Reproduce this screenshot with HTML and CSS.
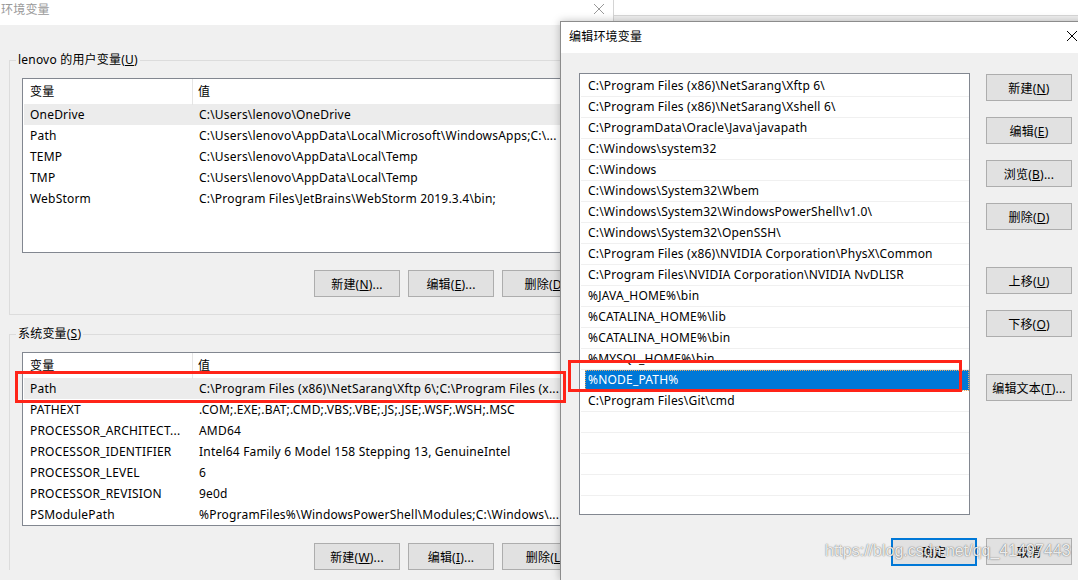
FILE: index.html
```html
<!DOCTYPE html>
<html lang="zh-CN">
<head>
    <meta charset="UTF-8">
    <title>环境变量</title>
    <link rel="stylesheet" href="styles.css">
</head>
<body>
    <div class="desk">
        <div class="env-win">
            <div class="env-title">
                <span>环境变量</span>
                <svg class="close-x" width="12" height="12" viewBox="0 0 12 12"><path d="M1 1L11 11M11 1L1 11" stroke="#999" stroke-width="1"/></svg>
            </div>
            <div class="env-body">
                <fieldset class="group">
                    <legend>lenovo 的用户变量(<u>U</u>)</legend>
                    <div class="var-list user-list">
                        <div class="var-head"><span>变量</span><span class="col-val">值</span></div>
                        <div class="var-row selected"><span>OneDrive</span><span class="val">C:\Users\lenovo\OneDrive</span></div>
                        <div class="var-row"><span>Path</span><span class="val">C:\Users\lenovo\AppData\Local\Microsoft\WindowsApps;C:\...</span></div>
                        <div class="var-row"><span>TEMP</span><span class="val">C:\Users\lenovo\AppData\Local\Temp</span></div>
                        <div class="var-row"><span>TMP</span><span class="val">C:\Users\lenovo\AppData\Local\Temp</span></div>
                        <div class="var-row"><span>WebStorm</span><span class="val">C:\Program Files\JetBrains\WebStorm 2019.3.4\bin;</span></div>
                    </div>
                    <div class="btn-row">
                        <button class="btn">新建(<u>N</u>)...</button>
                        <button class="btn">编辑(<u>E</u>)...</button>
                        <button class="btn">删除(<u>D</u>)</button>
                    </div>
                </fieldset>

                <fieldset class="group sys-group">
                    <legend>系统变量(<u>S</u>)</legend>
                    <div class="var-list sys-list">
                        <div class="var-head"><span>变量</span><span class="col-val">值</span></div>
                        <div class="var-row selected"><span>Path</span><span class="val">C:\Program Files (x86)\NetSarang\Xftp 6\;C:\Program Files (x...</span></div>
                        <div class="var-row"><span>PATHEXT</span><span class="val">.COM;.EXE;.BAT;.CMD;.VBS;.VBE;.JS;.JSE;.WSF;.WSH;.MSC</span></div>
                        <div class="var-row"><span>PROCESSOR_ARCHITECT...</span><span class="val">AMD64</span></div>
                        <div class="var-row"><span>PROCESSOR_IDENTIFIER</span><span class="val">Intel64 Family 6 Model 158 Stepping 13, GenuineIntel</span></div>
                        <div class="var-row"><span>PROCESSOR_LEVEL</span><span class="val">6</span></div>
                        <div class="var-row"><span>PROCESSOR_REVISION</span><span class="val">9e0d</span></div>
                        <div class="var-row"><span>PSModulePath</span><span class="val">%ProgramFiles%\WindowsPowerShell\Modules;C:\Windows\...</span></div>
                    </div>
                    <div class="btn-row">
                        <button class="btn">新建(<u>W</u>)...</button>
                        <button class="btn">编辑(<u>I</u>)...</button>
                        <button class="btn">删除(<u>L</u>)</button>
                    </div>
                </fieldset>
            </div>
        </div>
        <div class="behind">
            <div class="behind-bar"></div>
        </div>
    </div>

    <!-- 编辑环境变量 dialog, floating over the first window -->
    <div class="dialog">
        <div class="dlg-title">
            <span>编辑环境变量</span>
            <svg class="close-x" width="12" height="12" viewBox="0 0 12 12"><path d="M1 1L11 11M11 1L1 11" stroke="#000" stroke-width="1"/></svg>
        </div>
        <div class="dlg-body">
            <div class="path-list">
                <div class="path-row">C:\Program Files (x86)\NetSarang\Xftp 6\</div>
                <div class="path-row">C:\Program Files (x86)\NetSarang\Xshell 6\</div>
                <div class="path-row">C:\ProgramData\Oracle\Java\javapath</div>
                <div class="path-row">C:\Windows\system32</div>
                <div class="path-row">C:\Windows</div>
                <div class="path-row">C:\Windows\System32\Wbem</div>
                <div class="path-row">C:\Windows\System32\WindowsPowerShell\v1.0\</div>
                <div class="path-row">C:\Windows\System32\OpenSSH\</div>
                <div class="path-row">C:\Program Files (x86)\NVIDIA Corporation\PhysX\Common</div>
                <div class="path-row">C:\Program Files\NVIDIA Corporation\NVIDIA NvDLISR</div>
                <div class="path-row">%JAVA_HOME%\bin</div>
                <div class="path-row">%CATALINA_HOME%\lib</div>
                <div class="path-row">%CATALINA_HOME%\bin</div>
                <div class="path-row">%MYSQL_HOME%\bin</div>
                <div class="path-row active">%NODE_PATH%</div>
                <div class="path-row">C:\Program Files\Git\cmd</div>
                <div class="path-row"></div>
                <div class="path-row"></div>
                <div class="path-row"></div>
                <div class="path-row"></div>
                <div class="path-row"></div>
            </div>
            <div class="side-btns">
                <button class="btn">新建(<u>N</u>)</button>
                <button class="btn">编辑(<u>E</u>)</button>
                <button class="btn">浏览(<u>B</u>)...</button>
                <button class="btn">删除(<u>D</u>)</button>
                <button class="btn far">上移(<u>U</u>)</button>
                <button class="btn">下移(<u>O</u>)</button>
                <button class="btn far">编辑文本(<u>T</u>)...</button>
            </div>
            <div class="dlg-foot">
                <button class="btn default">确定</button>
                <button class="btn">取消</button>
            </div>
        </div>
    </div>

    <!-- red annotation boxes -->
    <div class="mark mark-left"></div>
    <div class="mark mark-right"></div>

    <div class="watermark">https://blog.csdn.net/qq_41497443</div>
</body>
</html>
```

FILE: styles.css
```css
body {
    margin: 0;
    width: 1078px;
    height: 580px;
    overflow: hidden;
    position: relative;
    background: #fff;
    color: #000;
    font-family: "Noto Sans", "Noto Sans CJK SC", sans-serif;
    font-size: 12px;
    letter-spacing: 0.2px;
}
u {
    text-decoration: underline;
    text-underline-offset: 1px;
}
.desk {
    display: flex;
    height: 580px;
    overflow: hidden;
}
.env-win {
    width: 614px;
    height: 580px;
    flex: none;
    overflow: hidden;
    background: #f0f0f0;
    border-right: 1px solid #d4d4d4;
    box-sizing: border-box;
}
.env-title {
    height: 25px;
    box-sizing: border-box;
    background: #fff;
    color: #999;
    display: flex;
    justify-content: space-between;
    padding: 2px 8px 0 1px;
    line-height: 16px;
}
.env-title .close-x {
    margin-top: 1px;
}
.env-body {
    padding: 0 12px 0 9px;
}
.group {
    margin: 27px 0 0;
    padding: 10px 12px 17px;
    border: 1px solid #dcdcdc;
    min-width: 0;
}
.group legend {
    padding: 0 2px;
    margin-left: -6px;
    line-height: 16px;
}
.sys-group {
    margin-top: 11px;
    border-bottom: none;
    padding-bottom: 0;
}
.var-list {
    background: #fff;
    border: 1px solid #828790;
    box-sizing: border-box;
    overflow: hidden;
}
.user-list {
    height: 175px;
}
.sys-list {
    height: 174px;
}
.var-head,
.var-row {
    display: grid;
    grid-template-columns: 169px 1fr;
    white-space: nowrap;
}
.var-head {
    height: 25px;
    line-height: 26px;
}
.var-head span {
    padding-left: 7px;
}
.var-head .col-val {
    padding-left: 5px;
    border-left: 1px solid #e5e5e5;
}
.var-row {
    height: 21px;
    line-height: 21px;
    margin: 0 1px;
}
.var-row span {
    padding-left: 6px;
    overflow: hidden;
}
.var-row .val {
    padding-left: 6px;
}
.var-row.selected {
    background: #ececec;
}
.btn-row {
    display: flex;
    justify-content: flex-end;
    gap: 8px;
    margin-top: 17px;
}
.btn {
    width: 86px;
    height: 27px;
    box-sizing: border-box;
    background: #e1e1e1;
    border: 1px solid #adadad;
    font: inherit;
    letter-spacing: inherit;
    color: #000;
    padding: 0;
    white-space: nowrap;
}
.btn.default {
    border: 2px solid #0078d7;
    height: 28px;
}
.behind {
    flex: 1;
    background: #fff;
}
.behind-bar {
    margin-top: 15px;
    height: 6px;
    background: #f0f0f0;
    border-top: 1px solid #d8d8d8;
}
.dialog {
    position: absolute;
    left: 560px;
    top: 21px;
    width: 526px;
    height: 559px;
    overflow: hidden;
    background: #f0f0f0;
    border: 1px solid #8c8c8c;
    border-bottom: none;
    box-shadow: 0 0 8px rgba(0, 0, 0, 0.25);
    box-sizing: border-box;
}
.dlg-title {
    height: 31px;
    box-sizing: border-box;
    background: #fff;
    display: flex;
    justify-content: space-between;
    align-items: center;
    padding: 0 7px 3px 8px;
}
.dlg-body {
    display: grid;
    grid-template-columns: 391px 86px;
    column-gap: 16px;
    padding: 20px 0 0 18px;
}
.path-list {
    height: 442px;
    background: #fff;
    border: 1px solid #828790;
    box-sizing: border-box;
    overflow: hidden;
    padding: 2px 0 0 1px;
}
.path-row {
    height: 20px;
    line-height: 20px;
    border-bottom: 1px solid #f0f0f0;
    padding-left: 7px;
    white-space: nowrap;
}
.path-row.active {
    background: #0078d7;
    color: #fff;
    margin-left: 4px;
    padding-left: 3px;
    outline: 1px dotted #e8a860;
    outline-offset: -1px;
}
.side-btns {
    display: flex;
    flex-direction: column;
    gap: 16px;
    padding-top: 1px;
}
.side-btns .far {
    margin-top: 21px;
}
.dlg-foot {
    grid-column: 1 / 3;
    display: flex;
    justify-content: flex-end;
    gap: 9px;
    margin-top: 23px;
}
.mark {
    position: absolute;
    border: 3px solid #ff2418;
    box-sizing: border-box;
}
.mark-left {
    left: 15px;
    top: 371px;
    width: 551px;
    height: 32px;
}
.mark-right {
    left: 568px;
    top: 360px;
    width: 394px;
    height: 32px;
}
.watermark {
    position: absolute;
    left: 825px;
    top: 542px;
    font-family: "Liberation Sans", Arial, sans-serif;
    font-size: 16px;
    letter-spacing: 0;
    color: rgba(255, 255, 255, 0.9);
    text-shadow: 0 0 1px rgba(0, 0, 0, 0.55), 0 0 2px rgba(0, 0, 0, 0.25);
    pointer-events: none;
}
```
